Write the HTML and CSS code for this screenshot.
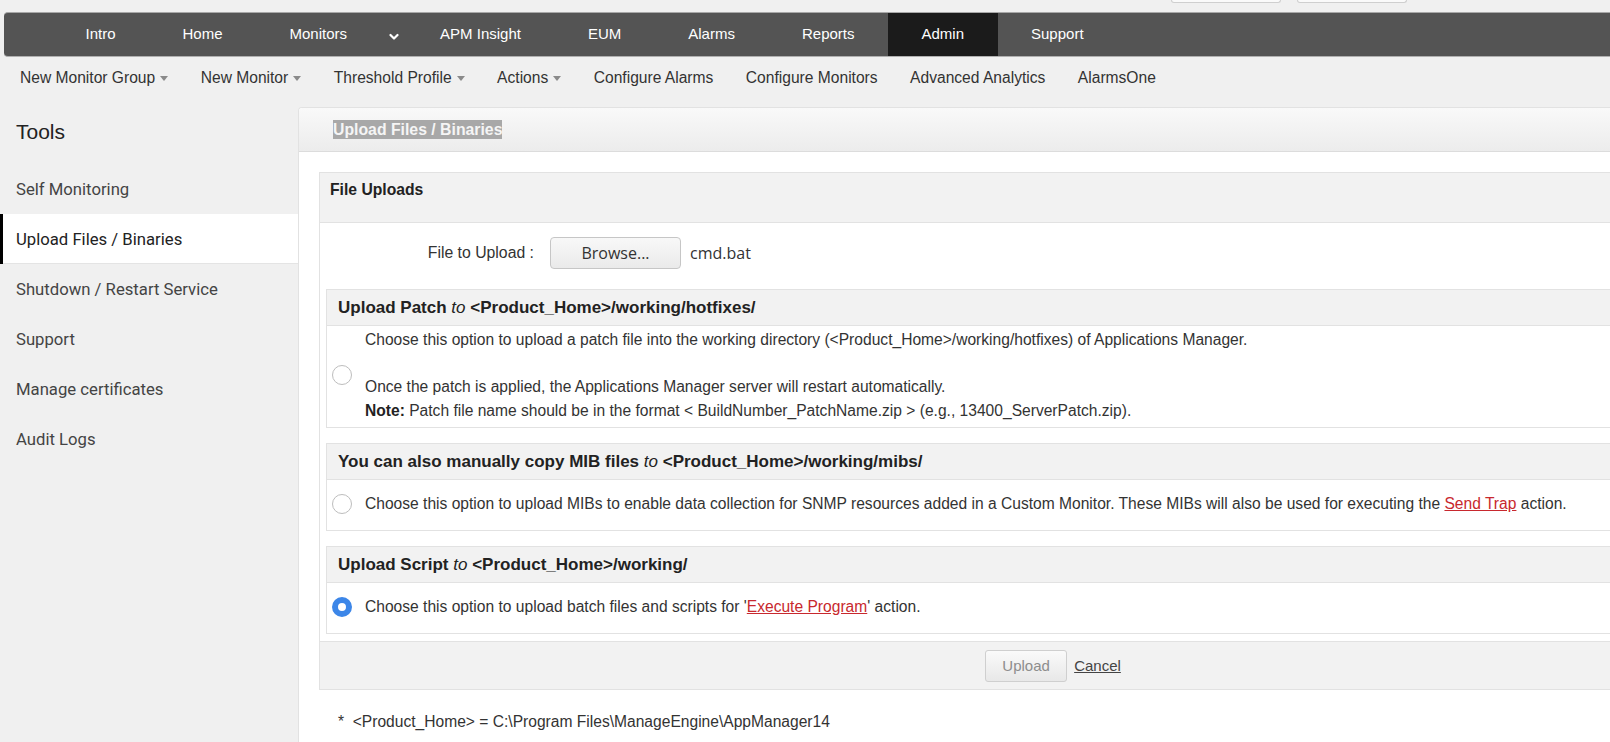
FILE: index.html
```html
<!DOCTYPE html>
<html lang="en">
<head>
<meta charset="utf-8">
<title>Upload Files / Binaries</title>
<link rel="stylesheet" href="styles.css">
</head>
<body>
<div class="topstrip"><span class="ghost-btn"></span><span class="ghost-btn"></span></div>
<nav class="navbar">
  <a class="nav-item">Intro</a>
  <a class="nav-item">Home</a>
  <a class="nav-item">Monitors</a>
  <span class="nav-caret"><svg width="10" height="8" viewBox="0 0 10 8"><path d="M1.5 2 L5 5.5 L8.5 2" fill="none" stroke="#fff" stroke-width="2.2" stroke-linecap="round" stroke-linejoin="round"/></svg></span>
  <a class="nav-item">APM Insight</a>
  <a class="nav-item">EUM</a>
  <a class="nav-item">Alarms</a>
  <a class="nav-item">Reports</a>
  <a class="nav-item active">Admin</a>
  <a class="nav-item">Support</a>
</nav>
<div class="subnav">
  <a class="sub-item">New Monitor Group<span class="caret-down"></span></a>
  <a class="sub-item">New Monitor<span class="caret-down"></span></a>
  <a class="sub-item">Threshold Profile<span class="caret-down"></span></a>
  <a class="sub-item">Actions<span class="caret-down"></span></a>
  <a class="sub-item">Configure Alarms</a>
  <a class="sub-item">Configure Monitors</a>
  <a class="sub-item">Advanced Analytics</a>
  <a class="sub-item">AlarmsOne</a>
</div>
<div class="layout">
  <aside class="sidebar">
    <h2 class="sidebar-title">Tools</h2>
    <ul class="side-list">
      <li class="side-item">Self Monitoring</li>
      <li class="side-item active">Upload Files / Binaries</li>
      <li class="side-item">Shutdown / Restart Service</li>
      <li class="side-item">Support</li>
      <li class="side-item">Manage certificates</li>
      <li class="side-item">Audit Logs</li>
    </ul>
  </aside>
  <main class="panel">
    <div class="panel-head"><span class="panel-title">Upload Files / Binaries</span></div>
    <div class="panel-body">
      <div class="upload-box">
        <div class="box-head">File Uploads</div>
        <div class="file-row">
          <label class="file-label">File to Upload :</label>
          <button class="browse">Browse...</button>
          <span class="file-name">cmd.bat</span>
        </div>
        <section class="option-box">
          <div class="option-head"><b>Upload Patch</b>&nbsp;<i>to</i>&nbsp;<b>&lt;Product_Home&gt;/working/hotfixes/</b></div>
          <div class="option-body">
            <span class="radio"></span>
            <div class="option-text">Choose this option to upload a patch file into the working directory (&lt;Product_Home&gt;/working/hotfixes) of Applications Manager.<br><br>Once the patch is applied, the Applications Manager server will restart automatically.<br><b>Note:</b> Patch file name should be in the format &lt; BuildNumber_PatchName.zip &gt; (e.g., 13400_ServerPatch.zip).</div>
          </div>
        </section>
        <section class="option-box">
          <div class="option-head"><b>You can also manually copy MIB files</b>&nbsp;<i>to</i>&nbsp;<b>&lt;Product_Home&gt;/working/mibs/</b></div>
          <div class="option-body">
            <span class="radio"></span>
            <div class="option-text">Choose this option to upload MIBs to enable data collection for SNMP resources added in a Custom Monitor. These MIBs will also be used for executing the <a class="red-link">Send Trap</a> action.</div>
          </div>
        </section>
        <section class="option-box last">
          <div class="option-head"><b>Upload Script</b>&nbsp;<i>to</i>&nbsp;<b>&lt;Product_Home&gt;/working/</b></div>
          <div class="option-body">
            <span class="radio checked"></span>
            <div class="option-text">Choose this option to upload batch files and scripts for '<a class="red-link">Execute Program</a>' action.</div>
          </div>
        </section>
        <div class="box-foot">
          <button class="btn-upload">Upload</button>
          <a class="cancel">Cancel</a>
        </div>
      </div>
      <p class="footnote">*&nbsp; &lt;Product_Home&gt; = C:\Program Files\ManageEngine\AppManager14</p>
    </div>
  </main>
</div>
</body>
</html>
```

FILE: styles.css
```css
html, body {
  margin: 0;
  padding: 0;
}
body {
  width: 1610px;
  height: 742px;
  overflow: hidden;
  background: #f0f0f0;
  font-family: "Liberation Sans", Arial, sans-serif;
  color: #333;
}
a { cursor: pointer; }

.topstrip {
  height: 12px;
  display: flex;
  justify-content: flex-end;
  gap: 16px;
  padding-right: 203px;
}
.ghost-btn {
  width: 108px;
  height: 2px;
  background: #fafafa;
  border: 1px solid #cfcfcf;
  border-top: 0;
  border-radius: 0 0 3px 3px;
}

.navbar {
  margin-left: 4px;
  height: 45px;
  box-sizing: border-box;
  background: #545454;
  border-top: 1px solid #a8a8a8;
  border-bottom: 1px solid #b0b0b0;
  border-radius: 4px 0 0 4px;
  display: flex;
  padding-left: 48px;
}
.nav-item {
  display: flex;
  align-items: center;
  padding: 0 33.5px 3px;
  color: #fff;
  font-size: 15px;
}
.nav-item.active { background: #1b1b1b; }
.nav-caret {
  width: 26px;
  display: flex;
  align-items: center;
  justify-content: center;
  padding-top: 4px;
}

.subnav {
  height: 40px;
  box-sizing: border-box;
  padding-top: 2px;
  display: flex;
  align-items: center;
  padding-left: 20px;
  gap: 32.5px;
  font-size: 15.6px;
  color: #333;
}
.sub-item {
  display: flex;
  align-items: center;
}
.caret-down {
  margin-left: 5px;
  width: 0;
  height: 0;
  border-left: 4.5px solid transparent;
  border-right: 4.5px solid transparent;
  border-top: 5px solid #8a8a8a;
}

.layout {
  display: flex;
  height: 645px;
}
.sidebar {
  width: 298px;
  flex: none;
}
.sidebar-title {
  margin: 0;
  height: 67px;
  box-sizing: border-box;
  padding-top: 2px;
  display: flex;
  align-items: center;
  padding-left: 16px;
  font-size: 21px;
  font-weight: normal;
  color: #222;
}
.side-list {
  list-style: none;
  margin: 0;
  padding: 0;
}
.side-item {
  height: 50px;
  display: flex;
  align-items: center;
  padding-left: 16px;
  font-family: Roboto, "Liberation Sans", sans-serif;
  font-size: 16.7px;
  color: #444;
}
.side-item.active {
  background: #fff;
  border-left: 3px solid #000;
  padding-left: 13px;
  color: #222;
  box-shadow: inset 0 -1px 0 #e4e4e4;
}

.panel {
  flex: 1;
  margin-top: 10px;
  background: #fff;
  border-left: 1px solid #e2e2e2;
  border-top: 1px solid #e2e2e2;
  border-top-left-radius: 4px;
  overflow: hidden;
}
.panel-head {
  height: 44px;
  box-sizing: border-box;
  border-bottom: 1px solid #dcdcdc;
  background: linear-gradient(#f9f9f9, #ececec);
  display: flex;
  align-items: center;
  padding-left: 34px;
}
.panel-title {
  background: #a8a8a8;
  color: #f5f5f5;
  font-weight: bold;
  font-size: 15.8px;
  line-height: 19px;
}
.panel-body {
  padding: 20px 0 0 20px;
}
.upload-box {
  width: 1466px;
  border: 1px solid #e2e2e2;
}
.box-head {
  height: 50px;
  box-sizing: border-box;
  background: #f2f2f2;
  border-bottom: 1px solid #e2e2e2;
  padding: 8px 10px;
  font-weight: bold;
  font-size: 15.7px;
  color: #222;
}
.file-row {
  height: 59px;
  display: flex;
  align-items: center;
  margin-bottom: 7px;
}
.file-label {
  width: 214px;
  box-sizing: border-box;
  text-align: right;
  margin-right: 16px;
  font-size: 15.8px;
  color: #333;
}
.browse {
  width: 131px;
  height: 32px;
  border: 1px solid #c6c6c6;
  border-radius: 4px;
  background: linear-gradient(#f8f8f8, #eaeaea);
  font-family: "Open Sans", sans-serif;
  font-size: 16px;
  color: #333;
}
.file-name {
  margin-left: 9px;
  font-family: "Open Sans", sans-serif;
  font-size: 16px;
  color: #333;
}

.option-box {
  margin: 0 0 15px 6px;
  border: 1px solid #e2e2e2;
}
.option-box.last { margin-bottom: 7px; }
.option-head {
  height: 36px;
  box-sizing: border-box;
  background: #f2f2f2;
  border-bottom: 1px solid #e2e2e2;
  display: flex;
  align-items: center;
  padding-left: 11px;
  font-size: 17px;
  color: #222;
}
.option-head i { font-weight: normal; }
.option-body {
  display: flex;
  align-items: center;
  min-height: 50px;
  box-sizing: border-box;
  padding: 2px 0 5px 5px;
}
.radio {
  flex: none;
  width: 20px;
  height: 20px;
  box-sizing: border-box;
  border-radius: 50%;
  border: 1px solid #bdbdbd;
  background: #fff;
}
.radio.checked {
  border: 6px solid #3c86e8;
}
.option-text {
  margin-left: 13px;
  font-size: 15.6px;
  line-height: 23.5px;
  color: #333;
}
.option-text b { color: #222; }
.red-link {
  color: #c8282e;
  text-decoration: underline;
}

.box-foot {
  height: 48px;
  box-sizing: border-box;
  background: #f2f2f2;
  border-top: 1px solid #e2e2e2;
  display: flex;
  align-items: center;
  justify-content: center;
  gap: 7px;
}
.btn-upload {
  width: 82px;
  height: 32px;
  border: 1px solid #cfcfcf;
  border-radius: 3px;
  background: linear-gradient(#fafafa, #e8e8e8);
  color: #8d8d8d;
  font-family: "Liberation Sans Narrow", "Liberation Sans", sans-serif;
  font-size: 15px;
}
.cancel {
  color: #444;
  text-decoration: underline;
  font-family: "Liberation Sans Narrow", "Liberation Sans", sans-serif;
  font-size: 15px;
}
.footnote {
  margin: 23px 0 0 19px;
  font-size: 15.6px;
  color: #333;
}
```
